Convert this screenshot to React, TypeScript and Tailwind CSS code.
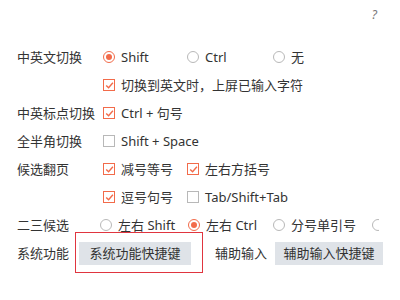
import React from "react";

const ORANGE = "#f26b4a";

function Radio({ checked, label }: { checked?: boolean; label: string }) {
  return (
    <span className="flex items-center">
      {checked ? (
        <span className="w-[12px] h-[12px] shrink-0 rounded-full border-[1.5px] border-[#f26b4a] flex items-center justify-center">
          <span className="w-[6px] h-[6px] rounded-full bg-[#f26b4a]" />
        </span>
      ) : (
        <span className="w-[12px] h-[12px] shrink-0 rounded-full border border-[#b8b8b8] bg-white" />
      )}
      {label ? <span className="ml-[6px]">{label}</span> : null}
    </span>
  );
}

function Check({ checked, label }: { checked?: boolean; label: string }) {
  return (
    <span className="flex items-center">
      {checked ? (
        <span className="w-[12px] h-[12px] border-[1.5px] border-[#f26b4a] flex items-center justify-center bg-white">
          <svg width="9" height="9" viewBox="0 0 9 9">
            <path d="M1.2 4.4 L3.6 6.8 L7.9 1.8" fill="none" stroke={ORANGE} strokeWidth="1.4" />
          </svg>
        </span>
      ) : (
        <span className="w-[12px] h-[12px] border border-[#b8b8b8] bg-white" />
      )}
      <span className="ml-[6px]">{label}</span>
    </span>
  );
}

function Row({ label, children }: { label: string; children?: React.ReactNode }) {
  return (
    <div className="flex items-center h-[28px]">
      <span className="w-[86px] shrink-0">{label}</span>
      {children}
    </div>
  );
}

export default function App() {
  return (
    <div
      className="w-[400px] h-[300px] bg-white text-[#333333] text-[13px] leading-none relative overflow-hidden"
      style={{ fontFamily: '"Noto Sans", "Noto Sans CJK SC", sans-serif' }}
    >
      <div className="flex justify-end pr-[23px] pt-[9px] h-[43px]">
        <span className="text-[12px] italic text-[#777777]">?</span>
      </div>
      <div className="pl-[17px]">
        <Row label="中英文切换">
          <span className="w-[84px]"><Radio checked label="Shift" /></span>
          <span className="w-[86px]"><Radio label="Ctrl" /></span>
          <span><Radio label="无" /></span>
        </Row>
        <Row label="">
          <Check checked label="切换到英文时，上屏已输入字符" />
        </Row>
        <Row label="中英标点切换">
          <Check checked label="Ctrl + 句号" />
        </Row>
        <Row label="全半角切换">
          <Check label="Shift + Space" />
        </Row>
        <Row label="候选翻页">
          <span className="w-[84px]"><Check checked label="减号等号" /></span>
          <Check checked label="左右方括号" />
        </Row>
        <Row label="">
          <span className="w-[84px]"><Check checked label="逗号句号" /></span>
          <Check label="Tab/Shift+Tab" />
        </Row>
        <div className="flex items-center h-[28px]">
          <span className="w-[83px] shrink-0">二三候选</span>
          <span className="w-[88px]"><Radio label="左右 Shift" /></span>
          <span className="w-[85px]"><Radio checked label="左右 Ctrl" /></span>
          <span className="w-[99px]"><Radio label="分号单引号" /></span>
          <span className="w-[7px] overflow-hidden"><Radio label="" /></span>
        </div>
        <div className="flex items-center h-[28px]">
          <span className="w-[62px] shrink-0">系统功能</span>
          <span className="relative">
            <span className="flex items-center justify-center w-[112px] h-[23px] bg-[#dfe3e8]">系统功能快捷键</span>
            <span className="absolute left-[-4px] top-[-10px] w-[128px] h-[41px] border-[1.5px] border-[#e0353f]" />
          </span>
          <span className="ml-[24px] w-[60px]">辅助输入</span>
          <span className="flex items-center justify-center w-[108px] h-[23px] bg-[#dfe3e8]">辅助输入快捷键</span>
        </div>
      </div>
    </div>
  );
}
